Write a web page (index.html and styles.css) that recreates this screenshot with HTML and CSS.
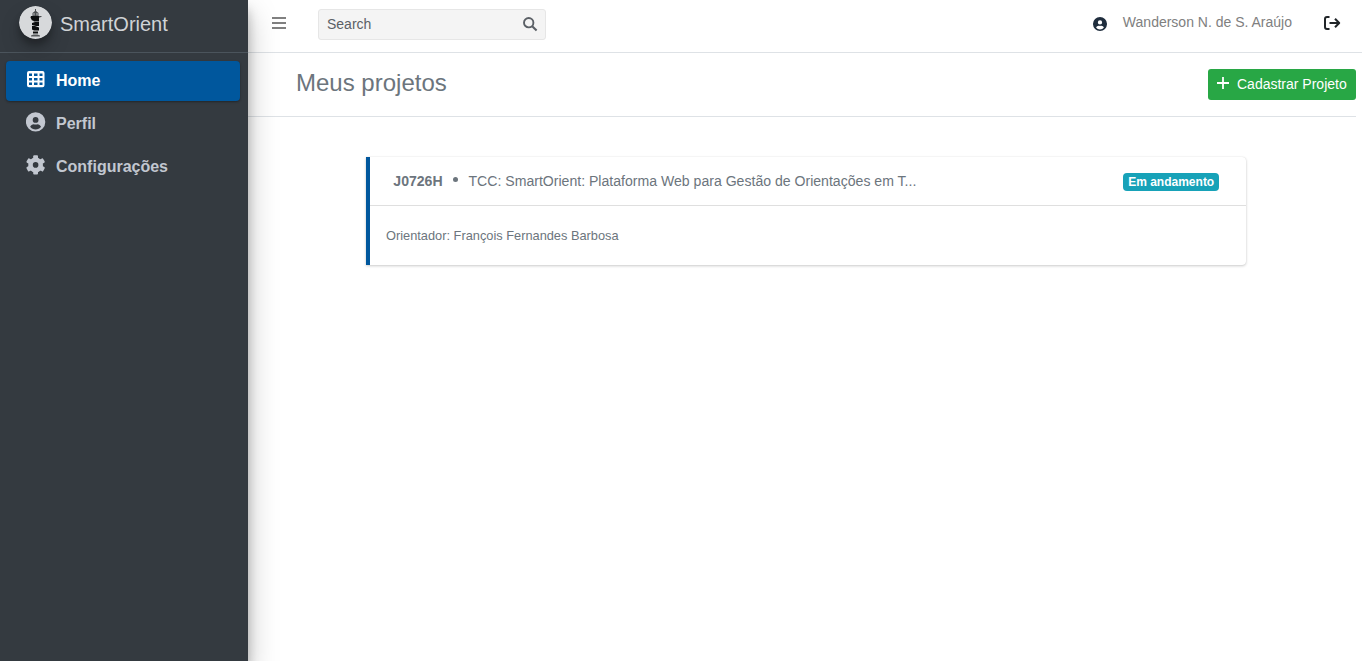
FILE: index.html
```html
<!DOCTYPE html>
<html lang="pt-BR">
<head>
<meta charset="utf-8">
<title>SmartOrient</title>
<link rel="stylesheet" href="styles.css">
</head>
<body>
<div class="app">
  <aside class="sidebar">
    <a class="brand">
      <svg class="brand-logo" viewBox="0 0 33 33">
        <circle cx="16.5" cy="16.5" r="16.5" fill="#d7d9db"/>
        <path d="M16 3h1v2l2.500 2v3h-6V7L16 5z" fill="#4b4e50"/>
        <path d="M12 10h10v1l-2 .500v4h-5l-1-1h-1l-1.500-3zM16 16h4v4h-3l-4-1v-2zM13 20h3l4 1.500v3h-5l-2-1zM14 25.500h5v2h-5z" fill="#0c0e0f"/>
        <path d="M15 7v2.500M18 7v2.500" stroke="#d7d9db" stroke-width=".8"/>
        <path d="M20 10.500h2.500" stroke="#4b4e50"/>
        <path d="M12 30.500v-1l2.500-1h4l2.500 1v1z" fill="#55585a"/>
      </svg>
      <span class="brand-name">SmartOrient</span>
    </a>
    <nav class="menu">
      <a class="menu-item active">
        <svg class="menu-icon" viewBox="0 0 20 20"><path fill="currentColor" fill-rule="evenodd" d="M3 2h13.500a2 2 0 0 1 2 2v12.300a2 2 0 0 1-2 2H3a2 2 0 0 1-2-2V4a2 2 0 0 1 2-2zM3 4.500v2.500h3V4.500zM8 4.500v2.500h3.500V4.500zM13.500 4.500v2.500h3V4.500zM3 8.900v2.500h3V8.900zM8 8.900v2.500h3.500V8.900zM13.500 8.900v2.500h3V8.900zM3 13.400v2.600h3v-2.600zM8 13.400v2.600h3.500v-2.600zM13.500 13.400v2.600h3v-2.600z"/></svg>
        <span>Home</span>
      </a>
      <a class="menu-item">
        <svg class="menu-icon" viewBox="0 0 20 20"><path fill="currentColor" fill-rule="evenodd" d="M9.600.200a9.700 9.700 0 1 1 0 19.400a9.700 9.700 0 1 1 0-19.400zM9.600 5a2.900 2.900 0 1 0 0 5.800a2.900 2.900 0 1 0 0-5.800zM4.200 14.800c1.200 1.700 3.200 2.700 5.400 2.700s4.200-1 5.400-2.700c-.7-1.500-2-2.500-3.500-2.500-.7 0-1.200.300-1.900.300s-1.200-.300-1.900-.300c-1.500 0-2.800 1-3.500 2.500z"/></svg>
        <span>Perfil</span>
      </a>
      <a class="menu-item">
        <svg class="menu-icon" viewBox="-9.600 -9.900 20 20">
          <circle r="5.100" fill="none" stroke="currentColor" stroke-width="4.600"/>
          <g fill="currentColor">
            <rect x="-2.400" y="-9.600" width="4.800" height="4.600" rx="1"/>
            <rect x="-2.400" y="-9.600" width="4.800" height="4.600" rx="1" transform="rotate(60)"/>
            <rect x="-2.400" y="-9.600" width="4.800" height="4.600" rx="1" transform="rotate(120)"/>
            <rect x="-2.400" y="-9.600" width="4.800" height="4.600" rx="1" transform="rotate(180)"/>
            <rect x="-2.400" y="-9.600" width="4.800" height="4.600" rx="1" transform="rotate(240)"/>
            <rect x="-2.400" y="-9.600" width="4.800" height="4.600" rx="1" transform="rotate(300)"/>
          </g>
        </svg>
        <span>Configurações</span>
      </a>
    </nav>
  </aside>
  <div class="main">
    <header class="topbar">
      <svg class="burger" viewBox="0 0 14 12"><path d="M0 0h14v2H0zM0 5h14v2H0zM0 10h14v2H0z" fill="#808080"/></svg>
      <div class="search">
        <span>Search</span>
        <svg class="search-icon" viewBox="0 0 15 15"><circle cx="5.700" cy="5.700" r="4.700" fill="none" stroke="#5b6066" stroke-width="1.900"/><path d="M9.200 9.200L13.600 13.600" stroke="#5b6066" stroke-width="2.100"/></svg>
      </div>
      <div class="user">
        <svg class="user-icon" viewBox="0 0 19.400 19.400"><path fill="#1f2d3d" fill-rule="evenodd" d="M9.700 0a9.700 9.700 0 1 1 0 19.400a9.700 9.700 0 1 1 0-19.400zM9.700 4.500a3 3 0 1 0 0 6a3 3 0 1 0 0-6zM4.300 14.600c1.200 1.700 3.200 2.700 5.400 2.700s4.200-1 5.400-2.700c-.7-1.500-2-2.500-3.500-2.500-.7 0-1.200.300-1.900.300s-1.200-.300-1.900-.300c-1.500 0-2.800 1-3.500 2.500z"/></svg>
        <span class="user-name">Wanderson N. de S. Araújo</span>
        <svg class="logout" viewBox="0 0 17 14" fill="none" stroke="#212529" stroke-width="2" stroke-linejoin="round"><path d="M5.500 1H3a2 2 0 0 0-2 2v8a2 2 0 0 0 2 2h2.500M5.500 7h9.500M11 2.800L15.200 7 11 11.200"/></svg>
      </div>
    </header>
    <section class="page-head">
      <h1>Meus projetos</h1>
      <button class="add"><svg class="plus" viewBox="0 0 12 12"><path d="M6 0v12M0 6h12" stroke="#fff" stroke-width="1.800"/></svg><span>Cadastrar Projeto</span></button>
    </section>
    <article class="card">
      <div class="card-head">
        <strong>J0726H</strong><i class="dot"></i><span class="card-title">TCC: SmartOrient: Plataforma Web para Gestão de Orientações em T...</span>
        <span class="badge">Em andamento</span>
      </div>
      <div class="card-body">Orientador: François Fernandes Barbosa</div>
    </article>
  </div>
</div>
</body>
</html>
```
FILE: styles.css
```css
* { box-sizing: border-box; }
body { margin: 0; font-family: "Liberation Sans", Arial, sans-serif; font-size: 16px; line-height: 1.5; color: #212529; background: #fff; }
svg { display: block; flex: none; }
.app { display: flex; height: 100vh; overflow: hidden; }
.sidebar { position: relative; z-index: 2; flex: 0 0 248px; background: #343a40; box-shadow: 0 14px 28px rgba(0,0,0,.25), 0 10px 10px rgba(0,0,0,.22); }
.brand { display: flex; align-items: center; gap: 8px; height: 53px; padding: 0 0 6px 19px; border-bottom: 1px solid #4b545c; color: #d0d3d6; font-size: 20px; }
.brand-name { padding-top: 2px; }
.brand-logo { width: 33px; height: 33px; margin-bottom: 1px; border-radius: 50%; box-shadow: 0 10px 20px rgba(0,0,0,.19), 0 6px 6px rgba(0,0,0,.23); }
.menu { display: flex; flex-direction: column; gap: 3px; padding: 8px 8px 0 6px; }
.menu-item { display: flex; align-items: center; gap: 10px; height: 40px; padding: 0 20px; border-radius: 4px; color: #c2c7d0; font-weight: 700; }
.menu-item.active { color: #fff; background: #00579d; box-shadow: 0 1px 3px rgba(0,0,0,.12), 0 1px 2px rgba(0,0,0,.24); }
.menu-icon { width: 20px; height: 20px; margin-bottom: 4px; }
.main { flex: 1; min-width: 0; }
.topbar { display: flex; align-items: center; height: 53px; padding: 0 22px 4px 24px; border-bottom: 1px solid #dee2e6; }
.burger { width: 14px; height: 12px; margin-bottom: 2px; }
.search { display: flex; align-items: center; justify-content: space-between; width: 228px; height: 31px; margin-left: 32px; padding: 0 7px 0 8px; border: 1px solid #e6e6e6; border-radius: 3px; background: #f4f4f4; color: #5b6066; font-size: 14px; }
.search-icon { width: 15px; height: 15px; }
.user { display: flex; align-items: center; margin-left: auto; }
.user-icon { width: 14px; height: 14px; }
.user-name { margin: 0 31px 4px 16px; color: #808080; font-size: 14px; }
.logout { width: 17px; height: 14px; margin: 0 -1px 2px 1px; }
.page-head { display: flex; align-items: center; justify-content: space-between; height: 64px; margin-right: 6px; padding-left: 48px; border-bottom: 1px solid #dee2e6; }
h1 { margin: 0 0 3px; color: #6c757d; font-size: 24px; font-weight: 400; }
.add { display: flex; align-items: center; width: 148px; height: 31px; padding: 0 9px 1px; gap: 8px; border: 0; border-radius: 3px; background: #28a745; color: #fff; font: 14px "Liberation Sans", Arial, sans-serif; white-space: nowrap; }
.plus { width: 12px; height: 12px; margin-bottom: 2px; }
.card { width: 880px; height: 108px; margin: 40px 0 0 118px; border-left: 4px solid #00579d; border-radius: 0 4px 4px 0; box-shadow: 0 0 1px rgba(0,0,0,.125), 0 1px 3px rgba(0,0,0,.2); color: #6c757d; }
.card-head { display: flex; align-items: center; height: 49px; padding: 0 27px 0 23.300px; border-bottom: 1px solid rgba(0,0,0,.125); font-size: 14.080px; line-height: 22px; }
.dot { width: 5px; height: 5px; margin: 0 10.900px 3px 10px; border-radius: 50%; background: #6c757d; }
.badge { margin: 2px 0 0 auto; padding: 3px 4.800px; border-radius: 4px; background: #17a2b8; color: #fff; font-size: 12px; font-weight: 700; line-height: 12px; }
.card-body { display: flex; align-items: center; height: 60px; padding-left: 16px; font-size: 12.800px; }
```
